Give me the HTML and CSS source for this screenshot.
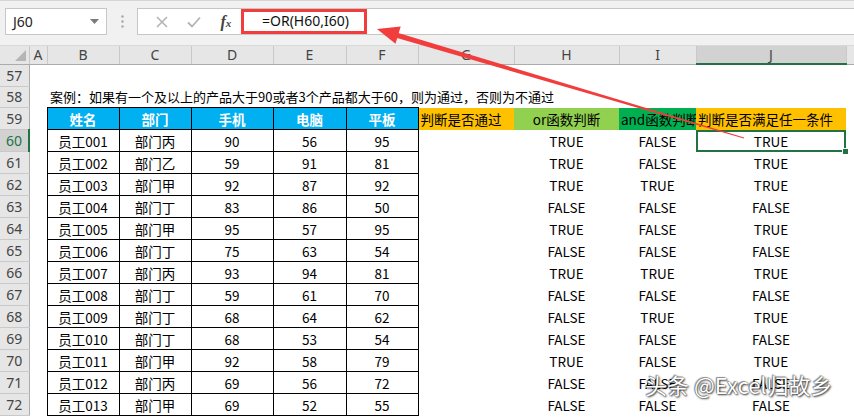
FILE: index.html
```html
<!DOCTYPE html>
<html lang="zh-CN">
<head>
    <meta charset="UTF-8">
    <title>OR函数判断</title>
    <link rel="stylesheet" href="styles.css">
</head>
<body>
<div class="app">
    <div class="toolbar">
        <div class="namebox">
            <span>J60</span>
            <svg class="caret" width="9" height="5" viewBox="0 0 9 5"><path d="M0 0h9L4.5 5z" fill="#7a7a7a"/></svg>
        </div>
        <div class="grip">
            <svg width="3" height="13" viewBox="0 0 3 13"><circle cx="1.5" cy="1.5" r="1.2" fill="#a8a8a8"/><circle cx="1.5" cy="6.5" r="1.2" fill="#a8a8a8"/><circle cx="1.5" cy="11.5" r="1.2" fill="#a8a8a8"/></svg>
        </div>
        <div class="fbar">
            <div class="fbtns">
                <svg width="12" height="12" viewBox="0 0 12 12"><path d="M1 1l10 10M11 1L1 11" stroke="#b4b4b4" stroke-width="1.6"/></svg>
                <svg width="14" height="12" viewBox="0 0 14 12"><path d="M1 6.5l4 4L13 1.5" stroke="#b4b4b4" stroke-width="1.8" fill="none"/></svg>
                <span class="fx">f<small>x</small></span>
            </div>
            <div class="formula">=OR(H60,I60)</div>
        </div>
    </div>

    <table class="sheet">
        <colgroup>
            <col class="w-rh"><col class="w-a"><col class="w-b"><col class="w-c"><col class="w-d"><col class="w-e">
            <col class="w-f"><col class="w-g"><col class="w-h"><col class="w-i"><col class="w-j"><col class="w-k">
        </colgroup>
        <tr class="cols">
            <th class="corner"><span class="tri"></span></th>
            <th>A</th><th>B</th><th>C</th><th>D</th><th>E</th><th>F</th><th>G</th><th>H</th><th>I</th><th class="on">J</th><th></th>
        </tr>
        <tr><th class="rh">57</th><td></td><td></td><td></td><td></td><td></td><td></td><td></td><td></td><td></td><td></td><td></td></tr>
        <tr><th class="rh">58</th><td></td><td class="note">案例：如果有一个及以上的产品大于90或者3个产品都大于60，则为通过，否则为不通过</td><td></td><td></td><td></td><td></td><td></td><td></td><td></td><td></td><td></td></tr>
        <tr><th class="rh">59</th><td></td>
            <td class="b hd">姓名</td><td class="b hd">部门</td><td class="b hd">手机</td><td class="b hd">电脑</td><td class="b hd">平板</td>
            <td class="orange left">判断是否通过</td><td class="lime">or函数判断</td><td class="green left">and函数判断</td><td class="orange left">判断是否满足任一条件</td><td></td></tr>
        <tr><th class="rh on">60</th><td></td><td class="b">员工001</td><td class="b">部门丙</td><td class="b">90</td><td class="b">56</td><td class="b">95</td><td></td><td>TRUE</td><td>FALSE</td><td class="sel">TRUE</td><td></td></tr>
        <tr><th class="rh">61</th><td></td><td class="b">员工002</td><td class="b">部门乙</td><td class="b">59</td><td class="b">91</td><td class="b">81</td><td></td><td>TRUE</td><td>FALSE</td><td>TRUE</td><td></td></tr>
        <tr><th class="rh">62</th><td></td><td class="b">员工003</td><td class="b">部门甲</td><td class="b">92</td><td class="b">87</td><td class="b">92</td><td></td><td>TRUE</td><td>TRUE</td><td>TRUE</td><td></td></tr>
        <tr><th class="rh">63</th><td></td><td class="b">员工004</td><td class="b">部门丁</td><td class="b">83</td><td class="b">86</td><td class="b">50</td><td></td><td>FALSE</td><td>FALSE</td><td>FALSE</td><td></td></tr>
        <tr><th class="rh">64</th><td></td><td class="b">员工005</td><td class="b">部门甲</td><td class="b">95</td><td class="b">57</td><td class="b">95</td><td></td><td>TRUE</td><td>FALSE</td><td>TRUE</td><td></td></tr>
        <tr><th class="rh">65</th><td></td><td class="b">员工006</td><td class="b">部门丁</td><td class="b">75</td><td class="b">63</td><td class="b">54</td><td></td><td>FALSE</td><td>FALSE</td><td>FALSE</td><td></td></tr>
        <tr><th class="rh">66</th><td></td><td class="b">员工007</td><td class="b">部门丙</td><td class="b">93</td><td class="b">94</td><td class="b">81</td><td></td><td>TRUE</td><td>TRUE</td><td>TRUE</td><td></td></tr>
        <tr><th class="rh">67</th><td></td><td class="b">员工008</td><td class="b">部门丁</td><td class="b">59</td><td class="b">61</td><td class="b">70</td><td></td><td>FALSE</td><td>FALSE</td><td>FALSE</td><td></td></tr>
        <tr><th class="rh">68</th><td></td><td class="b">员工009</td><td class="b">部门丁</td><td class="b">68</td><td class="b">64</td><td class="b">62</td><td></td><td>FALSE</td><td>TRUE</td><td>TRUE</td><td></td></tr>
        <tr><th class="rh">69</th><td></td><td class="b">员工010</td><td class="b">部门丁</td><td class="b">68</td><td class="b">53</td><td class="b">54</td><td></td><td>FALSE</td><td>FALSE</td><td>FALSE</td><td></td></tr>
        <tr><th class="rh">70</th><td></td><td class="b">员工011</td><td class="b">部门甲</td><td class="b">92</td><td class="b">58</td><td class="b">79</td><td></td><td>TRUE</td><td>FALSE</td><td>TRUE</td><td></td></tr>
        <tr><th class="rh">71</th><td></td><td class="b">员工012</td><td class="b">部门丙</td><td class="b">69</td><td class="b">56</td><td class="b">72</td><td></td><td>FALSE</td><td>FALSE</td><td>FALSE</td><td></td></tr>
        <tr><th class="rh">72</th><td></td><td class="b">员工013</td><td class="b">部门甲</td><td class="b">69</td><td class="b">52</td><td class="b">55</td><td></td><td>FALSE</td><td>FALSE</td><td>FALSE</td><td></td></tr>
    </table>

    <!-- annotation arrow pointing at the formula -->
    <svg class="arrow" width="854" height="417" viewBox="0 0 854 417">
        <polygon points="396.7,32.6 744.1,137.5 743.9,138.6 395.3,37.6" fill="#f23d3d"/>
        <polygon points="377,29 395.5,43.8 400.7,26.6" fill="#f23d3d"/>
    </svg>

    <div class="watermark">头条 @Excel归故乡</div>
</div>
</body>
</html>
```

FILE: styles.css
```css
body {
    margin: 0;
    padding: 0;
    background-color: #fff;
}

.app {
    position: relative;
    width: 854px;
    height: 417px;
    overflow: hidden;
    background-color: #fff;
    font-family: "Noto Sans CJK SC", "Noto Sans", sans-serif;
    color: #000;
}

/* formula bar */
.toolbar {
    display: flex;
    align-items: flex-start;
    height: 46px;
    box-sizing: border-box;
    padding-top: 7px;
    background-color: #f1f1f1;
    border-top: 1px solid #d6d6d6;
    border-bottom: 1px solid #d9d9d9;
}

.namebox {
    display: flex;
    align-items: center;
    justify-content: space-between;
    width: 102px;
    height: 27px;
    margin-left: 5px;
    padding: 0 7px 0 7px;
    box-sizing: border-box;
    background-color: #fff;
    border: 1px solid #c6c6c6;
    font-family: "Noto Sans", sans-serif;
    font-size: 14px;
    color: #222;
}

.grip {
    display: flex;
    align-items: center;
    justify-content: center;
    width: 30px;
    height: 27px;
}

.fbar {
    display: flex;
    align-items: center;
    flex: 1;
    height: 27px;
    box-sizing: border-box;
    background-color: #fff;
    border: 1px solid #c6c6c6;
    border-right: none;
}

.fbtns {
    display: flex;
    align-items: center;
    justify-content: space-around;
    width: 103px;
    padding-left: 8px;
    box-sizing: border-box;
}

.fx {
    font-family: "Liberation Serif", serif;
    font-style: italic;
    font-weight: bold;
    font-size: 16px;
    color: #444;
}

.fx small {
    font-size: 11px;
}

.formula {
    width: 126px;
    height: 25px;
    box-sizing: border-box;
    padding-left: 18px;
    border: 3px solid #f23d3d;
    font-family: "Noto Sans", sans-serif;
    font-size: 14px;
    line-height: 18px;
    color: #111;
}

/* grid */
.sheet {
    table-layout: fixed;
    border-collapse: collapse;
    width: 854px;
}

.w-rh { width: 29px; }
.w-a { width: 18px; }
.w-b { width: 72px; }
.w-c { width: 72px; }
.w-d { width: 82px; }
.w-e { width: 73px; }
.w-f { width: 72px; }
.w-g { width: 96px; }
.w-h { width: 105px; }
.w-i { width: 77px; }
.w-j { width: 150px; }
.w-k { width: 8px; }

.cols th {
    height: 17px;
    padding: 0;
    background-color: #e6e6e6;
    border-right: 1px solid #c9c9c9;
    border-bottom: 1px solid #ababab;
    font-family: "Noto Sans", sans-serif;
    font-weight: normal;
    font-size: 14px;
    line-height: 17px;
    color: #444;
}

.cols th.on {
    background-color: #d2d2d2;
    border-bottom: 2px solid #217346;
}

.corner {
    position: relative;
}

.tri {
    position: absolute;
    right: 3px;
    bottom: 3px;
    width: 0;
    height: 0;
    border-left: 11px solid transparent;
    border-bottom: 11px solid #b5b5b5;
}

.rh {
    padding: 0;
    background-color: #e6e6e6;
    border-bottom: 1px solid #c9c9c9;
    border-right: 1px solid #ababab;
    font-family: "Noto Sans", sans-serif;
    font-weight: normal;
    font-size: 14px;
    color: #444;
}

.rh.on {
    background-color: #d2d2d2;
    border-right: 2px solid #217346;
    color: #217346;
}

td {
    height: 21px;
    padding: 0;
    text-align: center;
    white-space: nowrap;
    overflow: hidden;
    font-size: 13.5px;
    line-height: 20px;
}

td.note {
    overflow: visible;
    text-align: left;
    padding-left: 3px;
    font-size: 13px;
}

td.b {
    border: 1px solid #000;
}

td.hd {
    background-color: #00b0f0;
    color: #fff;
    font-weight: bold;
}

.left {
    text-align: left;
    padding-left: 2px;
}

.orange {
    background-color: #ffc000;
}

.lime {
    background-color: #92d050;
}

.green {
    background-color: #00b050;
}

td.sel {
    position: relative;
    outline: 2px solid #217346;
    outline-offset: -2px;
    overflow: visible;
}

td.sel::after {
    content: "";
    position: absolute;
    right: -3px;
    bottom: -3px;
    width: 5px;
    height: 5px;
    background-color: #217346;
    border: 1px solid #fff;
}

.arrow {
    position: absolute;
    left: 0;
    top: 0;
    pointer-events: none;
}

.watermark {
    position: absolute;
    left: 645px;
    top: 370px;
    font-size: 22px;
    line-height: 28px;
    color: #fff;
    text-shadow: 0 0 1px #333, 1px 1px 2px rgba(0,0,0,0.8), -1px -1px 1px rgba(0,0,0,0.4);
    white-space: nowrap;
}
```
